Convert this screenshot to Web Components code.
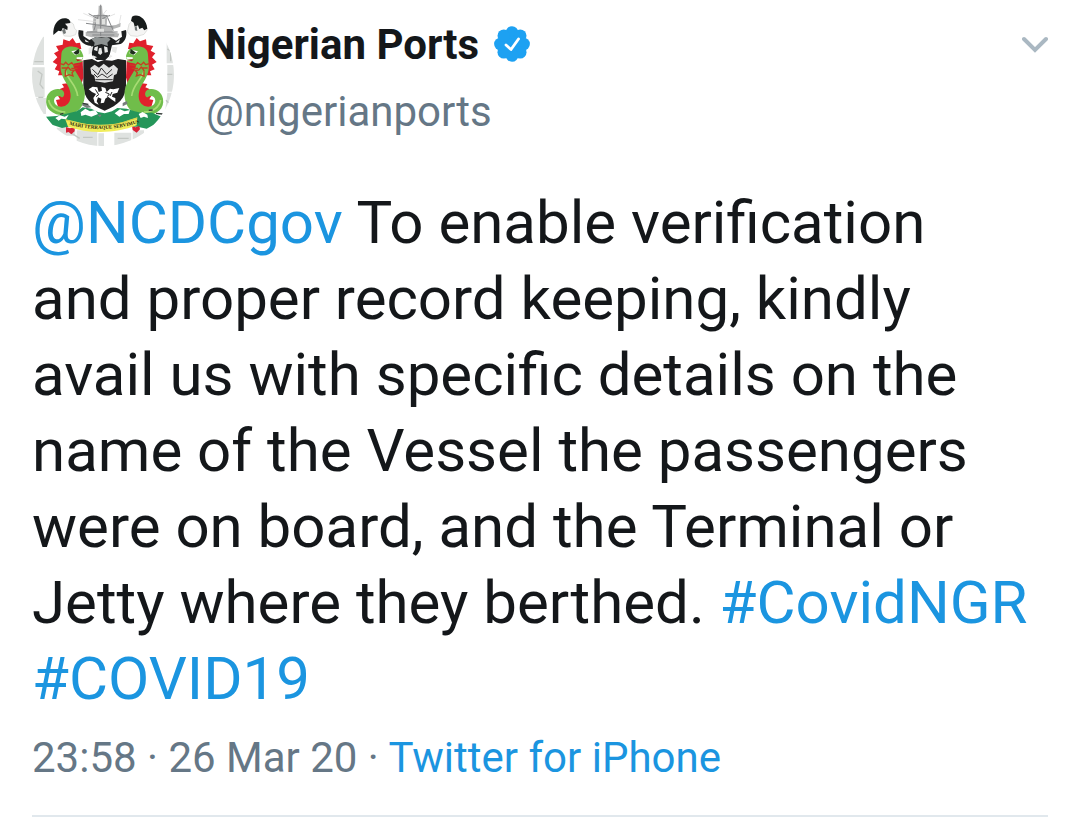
<!DOCTYPE html>
<html lang="en">
<head>
<meta charset="utf-8">
<meta name="viewport" content="width=device-width, initial-scale=1">
<title>Nigerian Ports</title>
<style>
    body {
        margin: 0;
        background: #fff;
        color: #14171a;
        font-family: Roboto, "Liberation Sans", sans-serif;
        --link: #1b95e0;
        --muted: #657786;
    }
</style>
</head>
<body>

<tweet-card>
    <tweet-author slot="author" name="Nigerian Ports" handle="@nigerianports"></tweet-author>
    <tweet-link href="#NCDCgov">@NCDCgov</tweet-link> To enable verification and proper record keeping, kindly avail us with specific details on the name of the Vessel the passengers were on board, and the Terminal or Jetty where they berthed. <tweet-link href="#CovidNGR">#CovidNGR</tweet-link> <tweet-link href="#COVID19">#COVID19</tweet-link>
    <tweet-meta slot="meta" time="23:58" date="26 Mar 20" source="Twitter for iPhone"></tweet-meta>
</tweet-card>

<script>
class PortsCrest extends HTMLElement {
    constructor(){
        super();
        this.shadow = this.attachShadow({mode: "open"});
        this.shadow.innerHTML =
        `
        <style>
            :host{
                display: block;
                width: 142px;
                height: 142px;
                border-radius: 50%;
                overflow: hidden;
            }

            svg {
                display: block;
                width: 100%;
                height: 100%;
            }
        </style>
        <svg viewBox="6 12 426 426" role="img" aria-label="Coat of arms">
            <defs>
                <path id="motto" d="M118 374Q220 403 328 368"/>
                <!-- one supporter, mirrored for the other side -->
                <g id="dragon">
                    <path fill="#e0202c" d="M154 147L150 128 138 130 128 114 118 124 100 118 98 134 78 138 86 152 72 160 82 172 68 186 82 194 74 208 88 214 84 226 100 226 112 244 124 230 104 190 110 150z"/>
                    <path fill="#d51f2c" d="M132 182L158 182 160 232 154 254 138 230 126 212z"/>
                    <path fill="#e0202c" d="M112 250L96 252 102 262 88 268 100 278 82 284 90 298 78 300 84 320 104 322 128 308 130 280z"/>
                    <path fill="#70bd4a" d="M94 165C94 145 112 138 130 140C148 141 156 152 160 168L158 178 138 181 158 183C150 192 132 186 130 194C130 215 158 235 164 272C168 315 145 344 105 346C65 346 44 324 49 296C54 272 80 260 99 272C106 280 102 292 95 292C85 284 72 290 72 302C74 320 95 325 108 316C126 304 126 278 112 254C98 232 90 215 92 195z"/>
                    <path fill="none" stroke="#a7db73" stroke-width="5" d="M106 214C114 240 140 255 143 288M56 300C60 322 80 336 106 336"/>
                    <path fill="none" stroke="#c64021" stroke-width="4" d="M88 190L101 194 107 187 115 195 125 188 133 197 149 194M95 204H111M124 205H143M106 212L114 201 122 210 133 211 126 218 129 228 117 224 106 229z"/>
                    <path fill="#fff" d="M124 154L145 149 150 160 136 166z"/>
                    <path fill="#1c301b" d="M130 158L146 146 148 160 138 164z"/>
                    <path fill="#fff" d="M140 172L159 171 156 177 140 177z"/>
                    <path fill="#b82b25" d="M137 178L159 180 142 184z"/>
                </g>
            </defs>
            <rect x="6" y="12" width="426" height="426" fill="#fff"/>
            <!-- faded quay behind the arms -->
            <path fill="#dfe2e0" d="M6 110H42V195H6zM6 202H44V292H6zM14 294H48V342H14zM410 110H432V190H410zM412 195H432V275H412zM412 278H432V344H404zM80 383H136V407H80zM140 391H202V440H140zM205 400H222V440H205zM253 398H304V440H253zM308 391H342V420H308z"/>
            <path fill="none" stroke="#c3c7c3" stroke-width="4" d="M13 185H40M23 213L36 223 30 253 40 266M25 292H40M412 147L422 153V184M412 223H427M408 301L418 311 412 332M112 392L149 415M159 412H188M263 415H296"/>
            <!-- lighthouse and crane -->
            <path fill="#b6b7b7" d="M206 17H216L218 42 232 47 230 78 258 75 272 68 271 80 248 88V96L268 101 264 112H185L167 107V96L189 92 187 80 191 51 205 43z"/>
            <path fill="none" stroke="#858789" stroke-width="3" d="M212 14V108M190 47H233M168 70L250 81M176 41L201 55M240 46L217 56M192 91L204 49M231 49L250 92M171 96H263M187 105H253"/>
            <path fill="none" stroke="#d4d5d5" stroke-width="2" d="M144 59L205 66M160 40L204 59M230 30L217 46M255 42L226 54M268 69L273 45"/>
            <path fill="#e0e1df" d="M198 57H208V73H198zM216 57H225V73H216zM202 86H222V95H202z"/>
            <!-- eagles -->
            <path fill="#f5f5f4" stroke="#d3d5d2" stroke-width="2" d="M118 63L130 72 134 86 140 91 137 104 122 109 103 108 97 98 101 75zM307 61L297 73 292 95 302 107 322 109 342 103 352 89 344 71z"/>
            <path fill="#171b1b" d="M70 105C68 75 84 54 105 55C115 55 122 62 121 69L105 71 113 80 112 90 98 84 94 94 85 92 77 99zM306 50C322 40 349 53 352 86L343 91 337 83 328 87 324 76 314 80 311 68 303 62z"/>
            <path fill="#717777" d="M96 90L105 86 108 99 101 103zM314 82L320 78 322 93 315 91z"/>
            <!-- buffalo head and helm -->
            <path fill="#1d1f20" d="M146 90L160 92 160 108 178 120 196 112H242L258 122 276 110 274 94 288 90C292 108 286 124 272 132L246 136 238 168 226 180H200L186 166 184 138C158 136 140 116 146 90z"/>
            <path fill="#8d9292" d="M184 117L200 110 214 114 230 110 242 118 232 128 234 138 214 132 192 138 194 128z"/>
            <path fill="#e8e9e8" d="M176 144L190 138 186 156 176 164zM246 140L262 142 258 160 246 154zM194 142L204 139 202 154 192 150zM222 139L232 142 234 156 224 158zM207 145L214 143 217 159 211 165 204 160zM164 118L178 127 167 126zM256 128L270 118 266 128zM188 166L202 172 188 176zM238 164L248 168 236 176z"/>
            <!-- shield -->
            <path fill="#202020" d="M160 181L186 177 204 186 222 180 246 182 264 177 288 181V256C288 294 265 316 224 332C184 316 160 294 160 256z"/>
            <path fill="#e1e2e1" d="M181 204L194 194 207 203 221 191 237 203 251 194 264 206 260 222 252 226 249 244 224 248 196 244 193 227 184 222z"/>
            <path fill="none" stroke="#323232" stroke-width="3" d="M187 208L204 224 214 204 230 223 246 208M192 222L202 232 216 222 232 233 248 222M196 239H248"/>
            <path fill="#fff" d="M176 268L188 260 202 262 206 276 216 272 214 260 226 264 230 276 240 266 250 268 268 264 262 278 248 282 246 290 256 294 256 306 244 298 234 290 226 296 222 308 212 310 214 296 204 292 200 304 206 314 194 308 190 294 198 282 186 276z"/>
            <path fill="none" stroke="#242424" stroke-width="3" d="M196 268L206 284 198 290M226 277L238 282 232 290M246 276L240 288"/>
            <use href="#dragon"/>
            <use href="#dragon" transform="translate(448 0) scale(-1 1)"/>
            <!-- ground -->
            <path fill="#25965a" d="M48 350L80 348 106 342 140 334 158 322 184 326 204 336 224 340 246 334 262 324 290 326 314 334 340 340 366 338 394 350 382 368 350 386 322 380H116L96 384 66 374z"/>
            <path fill="#fff" d="M76 354L90 346 104 350 116 344 108 358 94 356 86 362zM152 337L166 326 180 334 196 330 204 342 184 350 166 344 154 348zM254 340L270 328 284 334 300 330 296 342 282 342 268 350zM326 342L338 336 352 344 354 354 342 350 332 354z"/>
            <path fill="#777e7d" d="M158 309L172 312 184 322 170 324 156 316zM202 344H215L210 352zM278 309L290 303 293 311 278 319z"/>
            <path fill="none" stroke="#323a36" stroke-width="4" d="M158 310L175 313M90 343L100 340M356 331L368 330M378 340L398 342"/>
            <!-- roses and scroll -->
            <path fill="#d62337" d="M108 381L120 385 134 382 134 394 124 403 116 396 108 398zM306 378L316 382 328 378 330 388 320 398 308 390z"/>
            <path fill="#f1ed5b" d="M106 358L130 363C190 380 250 378 299 359L322 352 320 376C256 402 176 402 114 380z"/>
            <path fill="none" stroke="#c7be42" stroke-width="2" d="M107 360L131 366C196 382 250 380 299 361L321 355"/>
            <text font-family="Liberation Serif, serif" font-size="15" font-weight="700" fill="#29260f"><textPath href="#motto">MARI TERRAQUE SERVIMUS</textPath></text>
        </svg>
        `;
    }
}

class VerifiedBadge extends HTMLElement {
    constructor(){
        super();
        this.shadow = this.attachShadow({mode: "open"});
        this.shadow.innerHTML =
        `
        <style>
            :host{
                display: block;
                width: 38px;
                height: 38px;
            }

            svg {
                display: block;
            }
        </style>
        <svg width="38" height="38" viewBox="0 0 38 38" role="img" aria-label="Verified account">
            <g fill="#1da1f2">
                <circle cx="19" cy="18" r="14"/>
                <circle cx="19" cy="6.5" r="6.3"/>
                <circle cx="27.2" cy="9.8" r="6.3"/>
                <circle cx="30.6" cy="18" r="6.3"/>
                <circle cx="27.2" cy="26.2" r="6.3"/>
                <circle cx="19" cy="29.5" r="6.3"/>
                <circle cx="10.8" cy="26.2" r="6.3"/>
                <circle cx="7.4" cy="18" r="6.3"/>
                <circle cx="10.8" cy="9.8" r="6.3"/>
            </g>
            <path d="M13 19l5 4.500 7.500-10.500" fill="none" stroke="#fff" stroke-width="2.800" stroke-linecap="round" stroke-linejoin="round"/>
        </svg>
        `;
    }
}

class TweetAuthor extends HTMLElement {
    constructor(){
        super();
        this.shadow = this.attachShadow({mode: "open"});
    }

    connectedCallback(){
        this.render();
    }

    render(){
        this.shadow.innerHTML =
        `
        <style>
            :host{
                display: flex;
                align-items: flex-start;
                gap: 32px;
            }

            .names {
                flex: 1;
                padding-top: 8px;
            }

            .name {
                display: flex;
                align-items: center;
                gap: 14px;
                font-size: 42px;
                line-height: 66px;
                font-weight: 700;
            }

            h1 {
                margin: 0;
                font: inherit;
            }

            .handle {
                color: var(--muted);
                font-size: 42px;
                line-height: 68px;
            }

            button {
                margin: 24px 0 0;
                padding: 8px 0;
                border: 0;
                background: none;
                cursor: pointer;
            }

            button svg {
                display: block;
            }
        </style>
        <ports-crest></ports-crest>
        <div class="names">
            <div class="name"><h1>${this.getAttribute("name")}</h1><verified-badge></verified-badge></div>
            <div class="handle">${this.getAttribute("handle")}</div>
        </div>
        <button type="button" aria-label="More options">
            <svg width="26" height="18" viewBox="0 0 26 18">
                <path d="M2 3l11 11L24 3" fill="none" stroke="#aab8c2" stroke-width="4" stroke-linecap="round"/>
            </svg>
        </button>
        `;
    }
}

class TweetLink extends HTMLElement {
    constructor(){
        super();
        this.shadow = this.attachShadow({mode: "open"});
    }

    connectedCallback(){
        this.shadow.innerHTML =
        `
        <style>
            :host{
                display: inline;
            }

            a {
                color: var(--link);
                text-decoration: none;
            }
        </style>
        <a href="${this.getAttribute("href")}"><slot></slot></a>`;
    }
}

class TweetMeta extends HTMLElement {
    constructor(){
        super();
        this.shadow = this.attachShadow({mode: "open"});
    }

    connectedCallback(){
        this.shadow.innerHTML =
        `
        <style>
            :host{
                display: block;
                color: var(--muted);
                font-size: 42px;
                line-height: 66px;
            }
        </style>
        <time>${this.getAttribute("time")} · ${this.getAttribute("date")}</time> · <tweet-link href="#source">${this.getAttribute("source")}</tweet-link>
        `;
    }
}

class TweetCard extends HTMLElement {
    constructor(){
        super();
        this.shadow = this.attachShadow({mode: "open"});
        this.shadow.innerHTML =
        `
        <style>
            :host{
                display: block;
                padding: 4px 32px 0;
            }

            .text {
                margin: 39px 0 8px;
                padding-right: 16px;
                font-size: 60px;
                line-height: 76px;
            }

            footer {
                padding-bottom: 24px;
                border-bottom: 2px solid #e1e8ed;
            }
        </style>
        <article>
            <slot name="author"></slot>
            <div class="text"><slot></slot></div>
            <footer><slot name="meta"></slot></footer>
        </article>
        `;
    }
}

customElements.define("ports-crest", PortsCrest);
customElements.define("verified-badge", VerifiedBadge);
customElements.define("tweet-link", TweetLink);
customElements.define("tweet-author", TweetAuthor);
customElements.define("tweet-meta", TweetMeta);
customElements.define("tweet-card", TweetCard);
</script>
</body>
</html>
